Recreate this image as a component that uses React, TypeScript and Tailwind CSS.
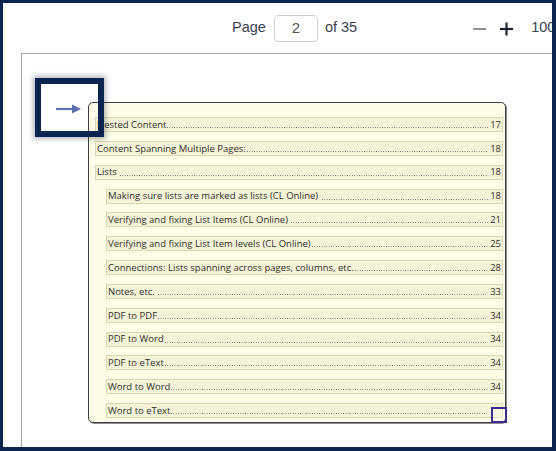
import React from "react";

type Entry = { label: string; page?: string; level: 0 | 1 };

const entries: Entry[] = [
  { label: "Nested Content", page: "17", level: 0 },
  { label: "Content Spanning Multiple Pages:", page: "18", level: 0 },
  { label: "Lists ", page: "18", level: 0 },
  { label: "Making sure lists are marked as lists (CL Online) ", page: "18", level: 1 },
  { label: "Verifying and fixing List Items (CL Online) ", page: "21", level: 1 },
  { label: "Verifying and fixing List Item levels (CL Online)", page: "25", level: 1 },
  { label: "Connections: Lists spanning across pages, columns, etc.", page: "28", level: 1 },
  { label: "Notes, etc. ", page: "33", level: 1 },
  { label: "PDF to PDF", page: "34", level: 1 },
  { label: "PDF to Word", page: "34", level: 1 },
  { label: "PDF to eText", page: "34", level: 1 },
  { label: "Word to Word", page: "34", level: 1 },
  { label: "Word to eText", level: 1 },
];

function TocRow({ entry }: { entry: Entry }) {
  return (
    <div
      className={
        "flex items-center h-[15px] bg-[#f5f3d7] border border-[#d8d5b5] pl-[1px] pr-[1px] text-[#2f2f2f] " +
        (entry.level === 1 ? "ml-[11px]" : "ml-0")
      }
    >
      <span className="shrink-0 whitespace-pre">{entry.label}</span>
      {/* dot leader */}
      <span className="flex-1 min-w-0 h-[1px] self-end mb-[3px] ml-[1px] bg-[linear-gradient(to_right,#6f6f6f_1px,transparent_1px)] bg-[length:2.4px_1px] bg-repeat-x" />
      {entry.page ? (
        <span className="shrink-0 pl-[2px]">{entry.page}</span>
      ) : (
        <span className="shrink-0 w-[14px]" />
      )}
    </div>
  );
}

export default function App() {
  return (
    <div className="w-[556px] h-[451px] bg-[#0b2450] pt-[3px] pl-[3px] pr-[4px] pb-[4px] overflow-hidden">
      <div className="relative w-full h-full bg-white flex flex-col overflow-hidden">
        {/* pager / zoom toolbar */}
        <div className="h-[50px] shrink-0 flex items-center whitespace-nowrap font-['Liberation_Sans',Arial,sans-serif] text-[14.5px] text-[#35404f]">
          <span className="shrink-0 ml-[229px]">Page</span>
          <div className="shrink-0 ml-[8px] w-[44px] h-[27px] rounded-[4px] border border-[#cfcfcf] flex items-center justify-center text-[#555] text-[15px]">
            2
          </div>
          <span className="shrink-0 ml-[7px]">of 35</span>
          <svg className="ml-[115px] shrink-0" width="15" height="15" viewBox="0 0 15 15">
            <line x1="1" y1="8" x2="14" y2="8" stroke="#8b9099" strokeWidth="2" />
          </svg>
          <svg className="ml-[12px] shrink-0" width="15" height="15" viewBox="0 0 15 15">
            <line x1="1" y1="8" x2="14" y2="8" stroke="#1c2232" strokeWidth="2.2" />
            <line x1="7.5" y1="1.5" x2="7.5" y2="14.5" stroke="#1c2232" strokeWidth="2.2" />
          </svg>
          <span className="shrink-0 ml-[17px] text-[#3a4452]">100%</span>
        </div>

        {/* document page */}
        <div className="flex-1 ml-[18px] border-l border-t border-[#a3a3a3] pt-[48px] pl-[66px]">
          <div className="w-[418px] h-[321px] rounded-[5px] border border-[#3b4048] bg-[#fdfde7] shadow-[1px_1px_0_#8c8c8c] pt-[14px] pl-[6px] pr-[2px] flex flex-col gap-[8.85px] font-['Open_Sans',sans-serif] text-[9.5px] leading-none">
            {entries.map((e) => (
              <TocRow key={e.label} entry={e} />
            ))}
          </div>
        </div>

        {/* focus highlight around the current element */}
        <div className="absolute left-[32px] top-[75px] w-[69px] h-[59px] border-[6px] border-[#0b2450] shadow-[0_0_5px_2px_rgba(40,50,70,0.35)] flex items-center justify-center">
          <svg width="26" height="12" viewBox="0 0 26 12" className="ml-[-2px] mt-[2px]">
            <line x1="0" y1="6" x2="17" y2="6" stroke="#5b6fa8" strokeWidth="2.2" />
            <polygon points="16,1.5 25,6 16,10.5" fill="#5b6fa8" />
          </svg>
        </div>

        {/* selection marker at the last entry */}
        <div className="absolute left-[488px] top-[404px] w-[16px] h-[16px] border-2 border-[#3c2b8e] bg-white/30" />
      </div>
    </div>
  );
}
